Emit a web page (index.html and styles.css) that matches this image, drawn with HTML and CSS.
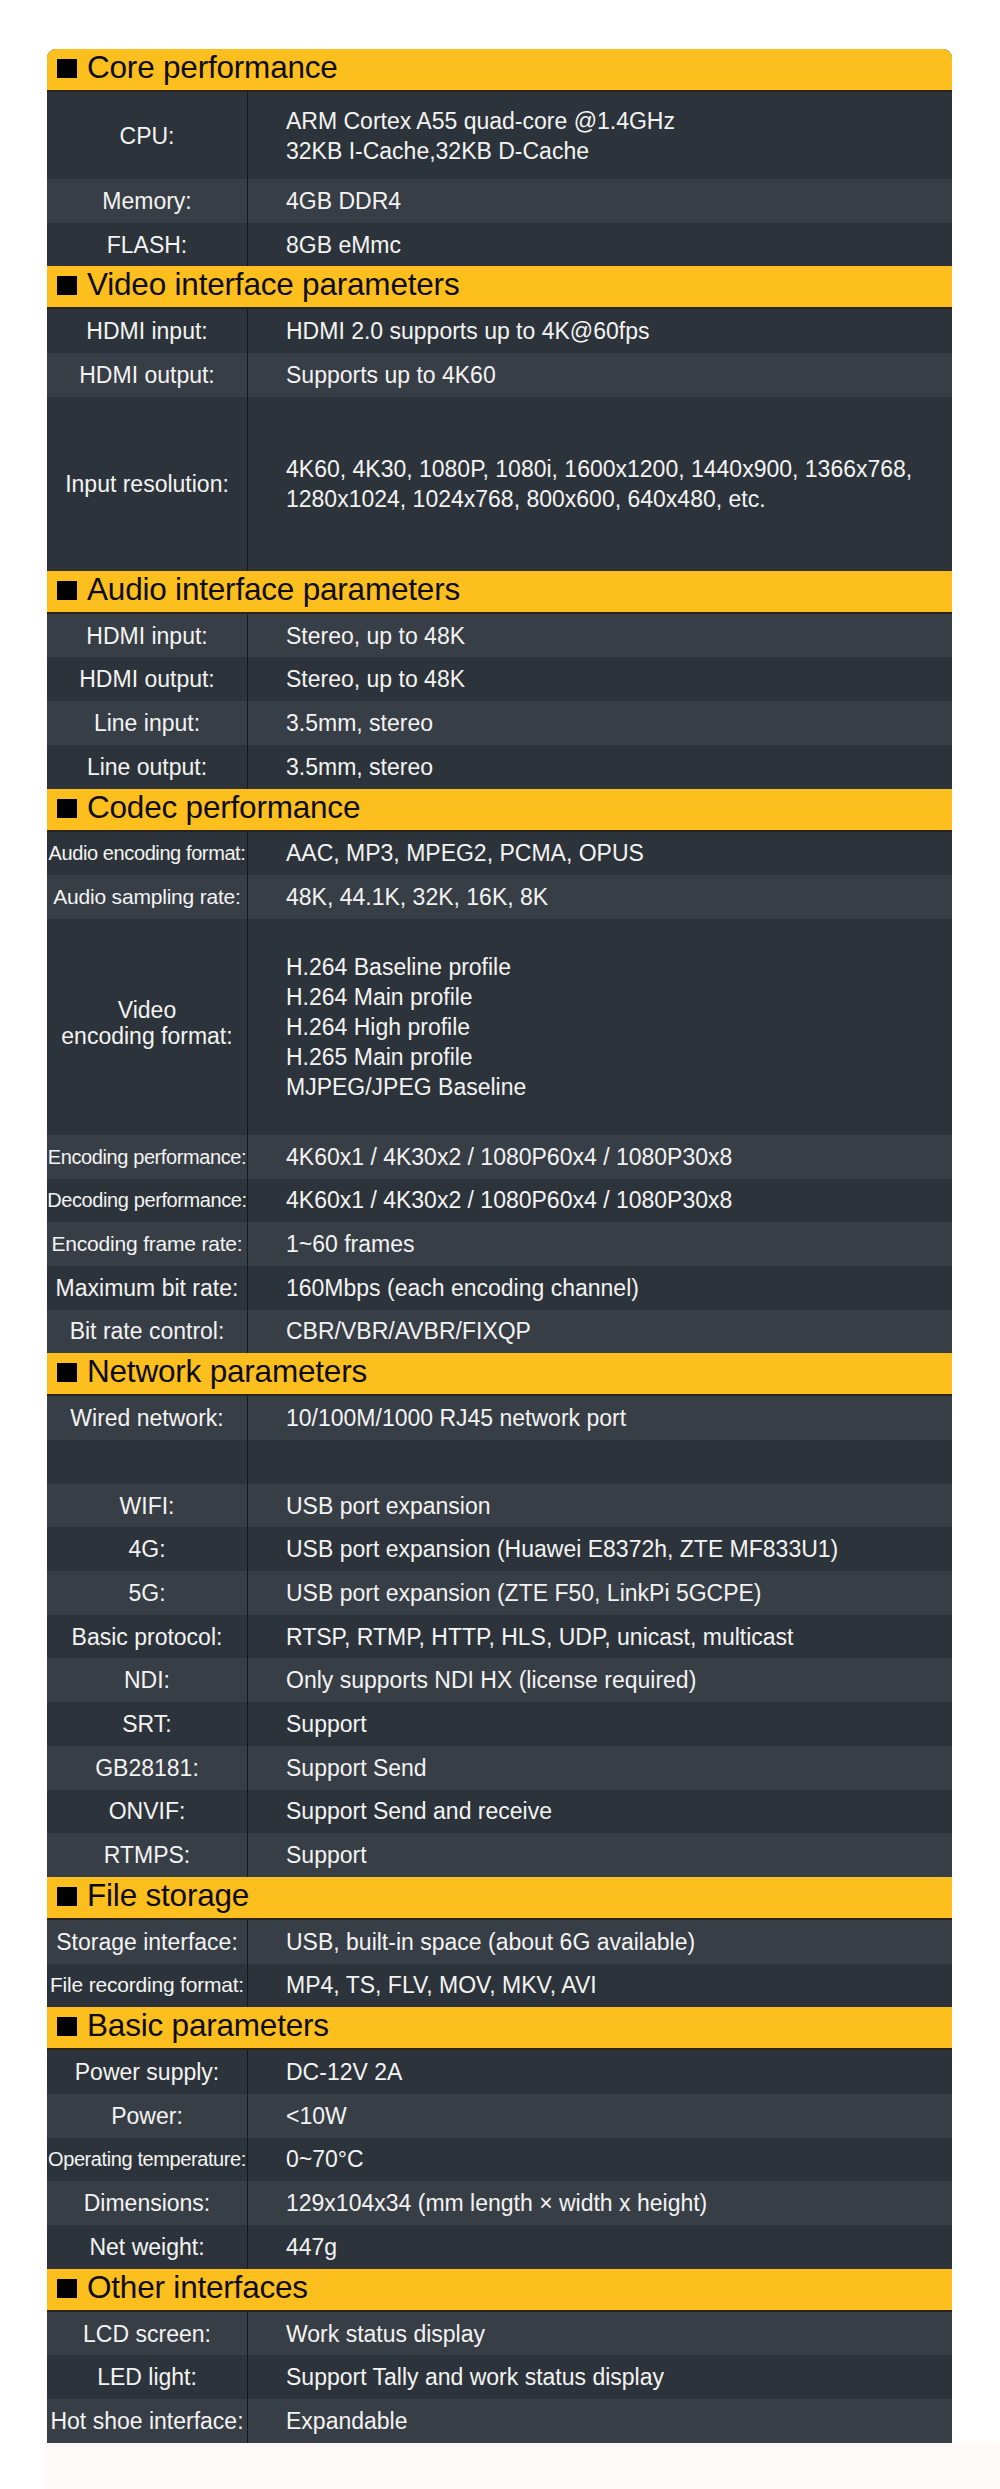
FILE: index.html
```html
<!DOCTYPE html>
<html lang="en">
<head>
<meta charset="utf-8">
<title>Specifications</title>
<link rel="stylesheet" href="styles.css">
</head>
<body>
<div class="sheet">
  <h2 class="group-title"><span class="mark"></span>Core performance</h2>
  <div class="row d h2"><div class="key">CPU:</div><div class="val">ARM Cortex A55 quad-core @1.4GHz<br>32KB I-Cache,32KB D-Cache</div></div>
  <div class="row l"><div class="key">Memory:</div><div class="val">4GB DDR4</div></div>
  <div class="row d"><div class="key">FLASH:</div><div class="val">8GB eMmc</div></div>

  <h2 class="group-title"><span class="mark"></span>Video interface parameters</h2>
  <div class="row d"><div class="key">HDMI input:</div><div class="val">HDMI 2.0 supports up to 4K@60fps</div></div>
  <div class="row l"><div class="key">HDMI output:</div><div class="val">Supports up to 4K60</div></div>
  <div class="row d h4"><div class="key">Input resolution:</div><div class="val">4K60, 4K30, 1080P, 1080i, 1600x1200, 1440x900, 1366x768,<br>1280x1024, 1024x768, 800x600, 640x480, etc.</div></div>

  <h2 class="group-title"><span class="mark"></span>Audio interface parameters</h2>
  <div class="row l"><div class="key">HDMI input:</div><div class="val">Stereo, up to 48K</div></div>
  <div class="row d"><div class="key">HDMI output:</div><div class="val">Stereo, up to 48K</div></div>
  <div class="row l"><div class="key">Line input:</div><div class="val">3.5mm, stereo</div></div>
  <div class="row d"><div class="key">Line output:</div><div class="val">3.5mm, stereo</div></div>

  <h2 class="group-title"><span class="mark"></span>Codec performance</h2>
  <div class="row d"><div class="key xs">Audio encoding format:</div><div class="val">AAC, MP3, MPEG2, PCMA, OPUS</div></div>
  <div class="row l"><div class="key sm">Audio sampling rate:</div><div class="val">48K, 44.1K, 32K, 16K, 8K</div></div>
  <div class="row d h5"><div class="key two">Video<br>encoding format:</div><div class="val">H.264 Baseline profile<br>H.264 Main profile<br>H.264 High profile<br>H.265 Main profile<br>MJPEG/JPEG Baseline</div></div>
  <div class="row l"><div class="key xs">Encoding performance:</div><div class="val">4K60x1 / 4K30x2 / 1080P60x4 / 1080P30x8</div></div>
  <div class="row d"><div class="key xs">Decoding performance:</div><div class="val">4K60x1 / 4K30x2 / 1080P60x4 / 1080P30x8</div></div>
  <div class="row l"><div class="key sm">Encoding frame rate:</div><div class="val">1~60 frames</div></div>
  <div class="row d"><div class="key">Maximum bit rate:</div><div class="val">160Mbps (each encoding channel)</div></div>
  <div class="row l"><div class="key">Bit rate control:</div><div class="val">CBR/VBR/AVBR/FIXQP</div></div>

  <h2 class="group-title"><span class="mark"></span>Network parameters</h2>
  <div class="row l"><div class="key">Wired network:</div><div class="val">10/100M/1000 RJ45 network port</div></div>
  <div class="row d"><div class="key"></div><div class="val"></div></div>
  <div class="row l"><div class="key">WIFI:</div><div class="val">USB port expansion</div></div>
  <div class="row d"><div class="key">4G:</div><div class="val">USB port expansion (Huawei E8372h, ZTE MF833U1)</div></div>
  <div class="row l"><div class="key">5G:</div><div class="val">USB port expansion (ZTE F50, LinkPi 5GCPE)</div></div>
  <div class="row d"><div class="key">Basic protocol:</div><div class="val">RTSP, RTMP, HTTP, HLS, UDP, unicast, multicast</div></div>
  <div class="row l"><div class="key">NDI:</div><div class="val">Only supports NDI HX (license required)</div></div>
  <div class="row d"><div class="key">SRT:</div><div class="val">Support</div></div>
  <div class="row l"><div class="key">GB28181:</div><div class="val">Support Send</div></div>
  <div class="row d"><div class="key">ONVIF:</div><div class="val">Support Send and receive</div></div>
  <div class="row l"><div class="key">RTMPS:</div><div class="val">Support</div></div>

  <h2 class="group-title"><span class="mark"></span>File storage</h2>
  <div class="row l"><div class="key">Storage interface:</div><div class="val">USB, built-in space (about 6G available)</div></div>
  <div class="row d"><div class="key sm">File recording format:</div><div class="val">MP4, TS, FLV, MOV, MKV, AVI</div></div>

  <h2 class="group-title"><span class="mark"></span>Basic parameters</h2>
  <div class="row d"><div class="key">Power supply:</div><div class="val">DC-12V 2A</div></div>
  <div class="row l"><div class="key">Power:</div><div class="val">&lt;10W</div></div>
  <div class="row d"><div class="key xs">Operating temperature:</div><div class="val">0~70°C</div></div>
  <div class="row l"><div class="key">Dimensions:</div><div class="val">129x104x34 (mm length × width x height)</div></div>
  <div class="row d"><div class="key">Net weight:</div><div class="val">447g</div></div>

  <h2 class="group-title"><span class="mark"></span>Other interfaces</h2>
  <div class="row l"><div class="key">LCD screen:</div><div class="val">Work status display</div></div>
  <div class="row d"><div class="key">LED light:</div><div class="val">Support Tally and work status display</div></div>
  <div class="row l"><div class="key">Hot shoe interface:</div><div class="val">Expandable</div></div>
</div>
<div class="tail"></div>
</body>
</html>
```

FILE: styles.css
```css
html, body {
  margin: 0;
  padding: 0;
  background: #ffffff;
}

body {
  font-family: "Liberation Sans", Arial, Helvetica, sans-serif;
  padding-top: 49px;
}

.sheet {
  margin-left: 47px;
  width: 905px;
  border-radius: 9px 9px 0 0;
  overflow: hidden;
  background: #2d333a;
}

.group-title {
  margin: 0;
  height: 43px;
  box-sizing: border-box;
  display: flex;
  align-items: center;
  padding: 0 0 4px 10px;
  background: #fdbf1e;
  border-bottom: 2px solid #2b2415;
  font-size: 31.5px;
  font-weight: normal;
  color: #0d0d0d;
  letter-spacing: -0.2px;
}

.mark {
  display: inline-block;
  width: 20px;
  height: 19px;
  background: #000;
  margin-right: 10px;
  margin-top: 2px;
}

.row {
  display: grid;
  grid-template-columns: 201px 1fr;
  height: 43.7px;
  color: #f3f3f3;
  font-size: 23px;
}

.row.d { background: #2d333a; }
.row.l { background: #383e46; }

.row.h2 { height: 87px; }
.row.h4 { height: 174px; }
.row.h5 { height: 216px; }

.key {
  display: flex;
  align-items: center;
  justify-content: center;
  text-align: center;
  border-right: 1px solid #14171b;
  white-space: nowrap;
  line-height: 26px;
}

.key.sm {
  font-size: 21px;
  letter-spacing: -0.2px;
}

.key.xs {
  font-size: 20px;
  letter-spacing: -0.4px;
}

.key.two {
  padding-bottom: 8px;
}

.val {
  display: flex;
  align-items: center;
  padding-left: 38px;
  line-height: 30px;
  white-space: nowrap;
}

.tail {
  margin-left: 45px;
  height: 48px;
  background: #fdf9f9;
}
```
